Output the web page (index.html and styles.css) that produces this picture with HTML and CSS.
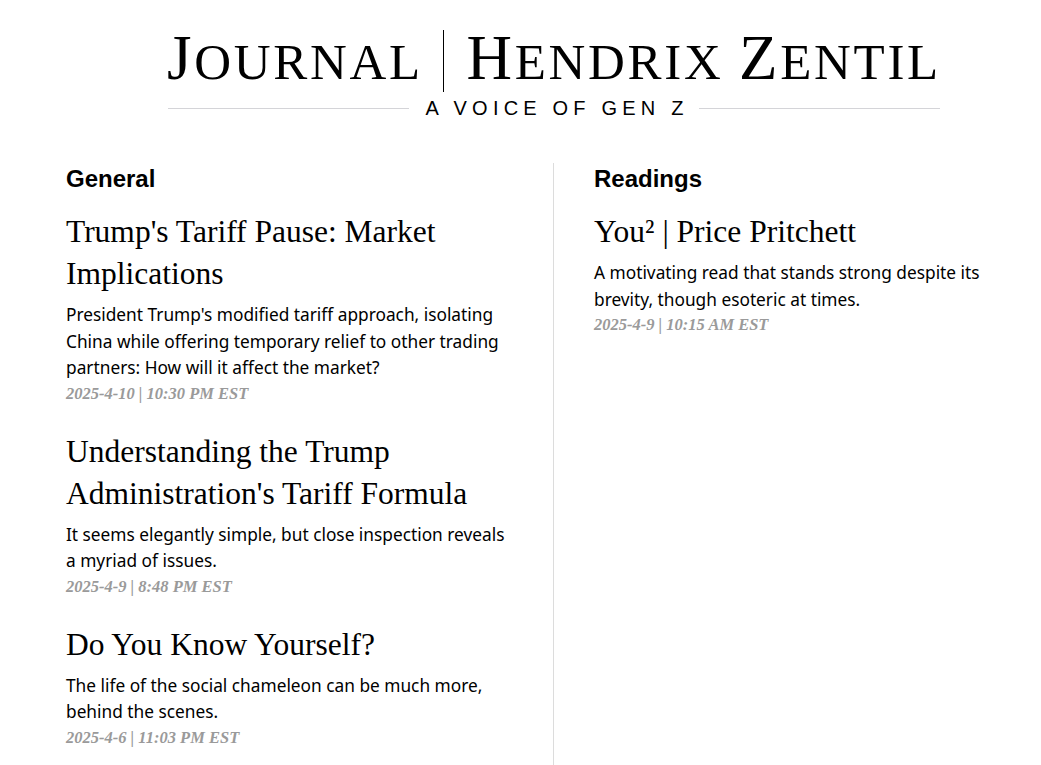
FILE: index.html
```html
<!DOCTYPE html>
<html lang="en">
<head>
<meta charset="utf-8">
<title>Journal | Hendrix Zentil</title>
<link rel="stylesheet" href="styles.css">
</head>
<body>
<div class="page">
  <header class="masthead">
    <h1 class="title"><span class="cap">J</span>ournal<span class="bar"></span><span class="cap">H</span>endrix <span class="cap">Z</span>entil</h1>
    <div class="tagline">
      <span class="rule"></span>
      <span class="tag-text">A VOICE OF GEN Z</span>
      <span class="rule"></span>
    </div>
  </header>

  <main class="columns">
    <section class="col col-left">
      <h2 class="section-title">General</h2>
      <article class="post">
        <h3 class="post-title">Trump's Tariff Pause: Market Implications</h3>
        <p class="post-desc">President Trump's modified tariff approach, isolating China while offering temporary relief to other trading partners: How will it affect the market?</p>
        <div class="post-date">2025-4-10 | 10:30 PM EST</div>
      </article>
      <article class="post">
        <h3 class="post-title">Understanding the Trump Administration's Tariff Formula</h3>
        <p class="post-desc">It seems elegantly simple, but close inspection reveals a myriad of issues.</p>
        <div class="post-date">2025-4-9 | 8:48 PM EST</div>
      </article>
      <article class="post">
        <h3 class="post-title">Do You Know Yourself?</h3>
        <p class="post-desc">The life of the social chameleon can be much more, behind the scenes.</p>
        <div class="post-date">2025-4-6 | 11:03 PM EST</div>
      </article>
    </section>
    <section class="col col-right">
      <h2 class="section-title">Readings</h2>
      <article class="post">
        <h3 class="post-title">You² | Price Pritchett</h3>
        <p class="post-desc">A motivating read that stands strong despite its brevity, though esoteric at times.</p>
        <div class="post-date">2025-4-9 | 10:15 AM EST</div>
      </article>
    </section>
  </main>
</div>
</body>
</html>
```

FILE: styles.css
```css
* { box-sizing: border-box; }
html, body { margin: 0; padding: 0; background: #fff; }
body { color: #000; font-family: "Liberation Sans", Arial, sans-serif; }

.page { padding-top: 22px; }

.masthead {
  width: 772px;
  margin-left: 168px;
  display: flex;
  flex-direction: column;
  align-items: center;
}
.title {
  margin: 0;
  font-family: "Liberation Serif", "Times New Roman", serif;
  font-weight: 400;
  font-size: 51px;
  line-height: 72px;
  height: 72px;
  text-transform: uppercase;
  letter-spacing: 2.7px;
  white-space: nowrap;
}
.title .cap { font-size: 63px; letter-spacing: 2.7px; }
.title .bar {
  display: inline-block;
  width: 1.5px;
  height: 62px;
  background: #000;
  margin: 0 22px 0 20px;
  vertical-align: -13px;
}
.tagline {
  width: 100%;
  display: flex;
  align-items: center;
  margin-top: 2px;
}
.rule { flex: 1; height: 1px; background: #d4d4d8; }
.tag-text {
  font-family: "Liberation Sans", Arial, sans-serif;
  font-size: 20px;
  letter-spacing: 5.2px;
  padding: 0 10px 0 16px;
  line-height: 24px;
}

.columns {
  display: flex;
  margin-top: 43px;
  margin-left: 66px;
}
.col-left {
  width: 488px;
  padding-right: 44px;
  padding-top: 2px;
  border-right: 1px solid #dcdcdc;
  padding-bottom: 40px;
}
.col-right {
  width: 446px;
  padding-left: 40px;
  padding-top: 2px;
}
.section-title {
  margin: 0 0 18px;
  font-family: "Liberation Sans", Arial, sans-serif;
  font-weight: 700;
  font-size: 24px;
  line-height: 28px;
}
.post { margin-bottom: 26px; }
.post-title {
  margin: 0;
  font-family: "Liberation Serif", "Times New Roman", serif;
  font-weight: 400;
  font-size: 31.5px;
  line-height: 42px;
}
.post-desc {
  margin: 7px 0 0;
  font-family: "Noto Sans", "Liberation Sans", sans-serif;
  font-size: 17.3px;
  line-height: 26.5px;
}
.post-date {
  font-family: "Liberation Serif", serif;
  font-style: italic;
  font-weight: 700;
  font-size: 16.5px;
  line-height: 23px;
  color: #9a9a9a;
}
```
